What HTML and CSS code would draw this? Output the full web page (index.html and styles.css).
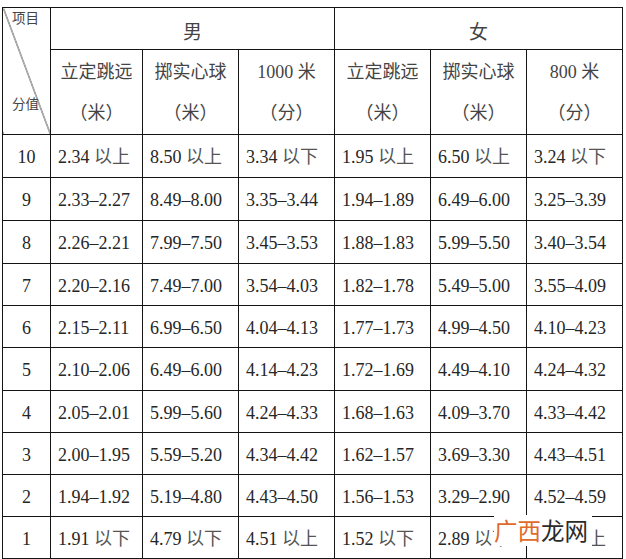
FILE: index.html
```html
<!DOCTYPE html>
<html lang="zh-CN">
<head>
<meta charset="utf-8">
<title>体育测试评分标准</title>
<link rel="stylesheet" href="styles.css">
</head>
<body>
<div class="page">
  <table class="score">
    <colgroup>
      <col class="c-score"><col class="c-a"><col class="c-b"><col class="c-b"><col class="c-b"><col class="c-b"><col class="c-b">
    </colgroup>
    <thead>
      <tr class="h1">
        <th rowspan="2" class="corner">
          <div class="corner-in"><span class="lbl">项目</span><span class="lbl">分值</span></div>
        </th>
        <th colspan="3" class="sex">男</th>
        <th colspan="3" class="sex">女</th>
      </tr>
      <tr class="h2">
        <th>立定跳远<br>（米）</th>
        <th>掷实心球<br>（米）</th>
        <th>1000 米<br>（分）</th>
        <th>立定跳远<br>（米）</th>
        <th>掷实心球<br>（米）</th>
        <th>800 米<br>（分）</th>
      </tr>
    </thead>
    <tbody>
      <tr class="t"><td class="n">10</td><td>2.34 <span class="cn">以上</span></td><td>8.50 <span class="cn">以上</span></td><td>3.34 <span class="cn">以下</span></td><td>1.95 <span class="cn">以上</span></td><td>6.50 <span class="cn">以上</span></td><td>3.24 <span class="cn">以下</span></td></tr>
      <tr class="t"><td class="n">9</td><td>2.33–2.27</td><td>8.49–8.00</td><td>3.35–3.44</td><td>1.94–1.89</td><td>6.49–6.00</td><td>3.25–3.39</td></tr>
      <tr class="t"><td class="n">8</td><td>2.26–2.21</td><td>7.99–7.50</td><td>3.45–3.53</td><td>1.88–1.83</td><td>5.99–5.50</td><td>3.40–3.54</td></tr>
      <tr><td class="n">7</td><td>2.20–2.16</td><td>7.49–7.00</td><td>3.54–4.03</td><td>1.82–1.78</td><td>5.49–5.00</td><td>3.55–4.09</td></tr>
      <tr><td class="n">6</td><td>2.15–2.11</td><td>6.99–6.50</td><td>4.04–4.13</td><td>1.77–1.73</td><td>4.99–4.50</td><td>4.10–4.23</td></tr>
      <tr class="t"><td class="n">5</td><td>2.10–2.06</td><td>6.49–6.00</td><td>4.14–4.23</td><td>1.72–1.69</td><td>4.49–4.10</td><td>4.24–4.32</td></tr>
      <tr><td class="n">4</td><td>2.05–2.01</td><td>5.99–5.60</td><td>4.24–4.33</td><td>1.68–1.63</td><td>4.09–3.70</td><td>4.33–4.42</td></tr>
      <tr><td class="n">3</td><td>2.00–1.95</td><td>5.59–5.20</td><td>4.34–4.42</td><td>1.62–1.57</td><td>3.69–3.30</td><td>4.43–4.51</td></tr>
      <tr><td class="n">2</td><td>1.94–1.92</td><td>5.19–4.80</td><td>4.43–4.50</td><td>1.56–1.53</td><td>3.29–2.90</td><td>4.52–4.59</td></tr>
      <tr><td class="n">1</td><td>1.91 <span class="cn">以下</span></td><td>4.79 <span class="cn">以下</span></td><td>4.51 <span class="cn">以上</span></td><td>1.52 <span class="cn">以下</span></td><td>2.89 <span class="cn">以下</span></td><td>4.60 <span class="cn">以上</span></td></tr>
    </tbody>
  </table>
  <div class="watermark"><span class="wm-a">广西</span><span class="wm-b">龙网</span></div>
</div>
</body>
</html>
```

FILE: styles.css
```css
html, body {
  margin: 0;
  padding: 0;
  background: #fff;
}
.page {
  position: relative;
  width: 626px;
  height: 559px;
  padding: 7px 0 0 2px;
  box-sizing: border-box;
  overflow: hidden;
}
.score {
  border-collapse: collapse;
  table-layout: fixed;
  width: 621px;
  font-family: "Liberation Serif", "Noto Sans CJK SC", serif;
  font-size: 18px;
  color: #262626;
}
.c-score { width: 48px; }
.c-a { width: 92px; }
.c-b { width: 96px; }
.score th,
.score td {
  border: 1px solid #141414;
  padding: 0;
}
.score th {
  font-weight: normal;
  text-align: center;
  color: #444;
}
.h1 { height: 42px; }
.h1 .sex { font-size: 19px; padding-top: 4px; }
.h2 { height: 84px; }
.h2 th { line-height: 41px; padding-top: 2px; }
.corner {
  background: linear-gradient(to top right, transparent calc(50% - 0.7px), #1a1a1a 50%, transparent calc(50% + 0.7px));
  vertical-align: top;
}
.corner-in {
  height: 126px;
  display: flex;
  flex-direction: column;
  justify-content: space-between;
  align-items: flex-start;
  padding: 3px 0 21px 9px;
  box-sizing: border-box;
}
.lbl {
  font-size: 13.5px;
  line-height: 16px;
  color: #444;
}
.score tbody tr { height: 42px; }
.score tbody tr.t { height: 43px; }
.score td {
  text-align: left;
  padding-left: 7px;
  padding-top: 2px;
  line-height: 20px;
  white-space: nowrap;
}
.score td.n {
  text-align: center;
  padding-left: 0;
}
.cn { color: #555; }
.watermark {
  position: absolute;
  left: 494px;
  top: 515px;
  width: 98px;
  height: 31px;
  background: #fff;
  font-family: "Noto Sans CJK SC", sans-serif;
  font-size: 23.5px;
  line-height: 31px;
  display: flex;
  align-items: center;
}
.wm-a { color: #e06a2c; }
.wm-b { color: #2b2b2b; }
```
